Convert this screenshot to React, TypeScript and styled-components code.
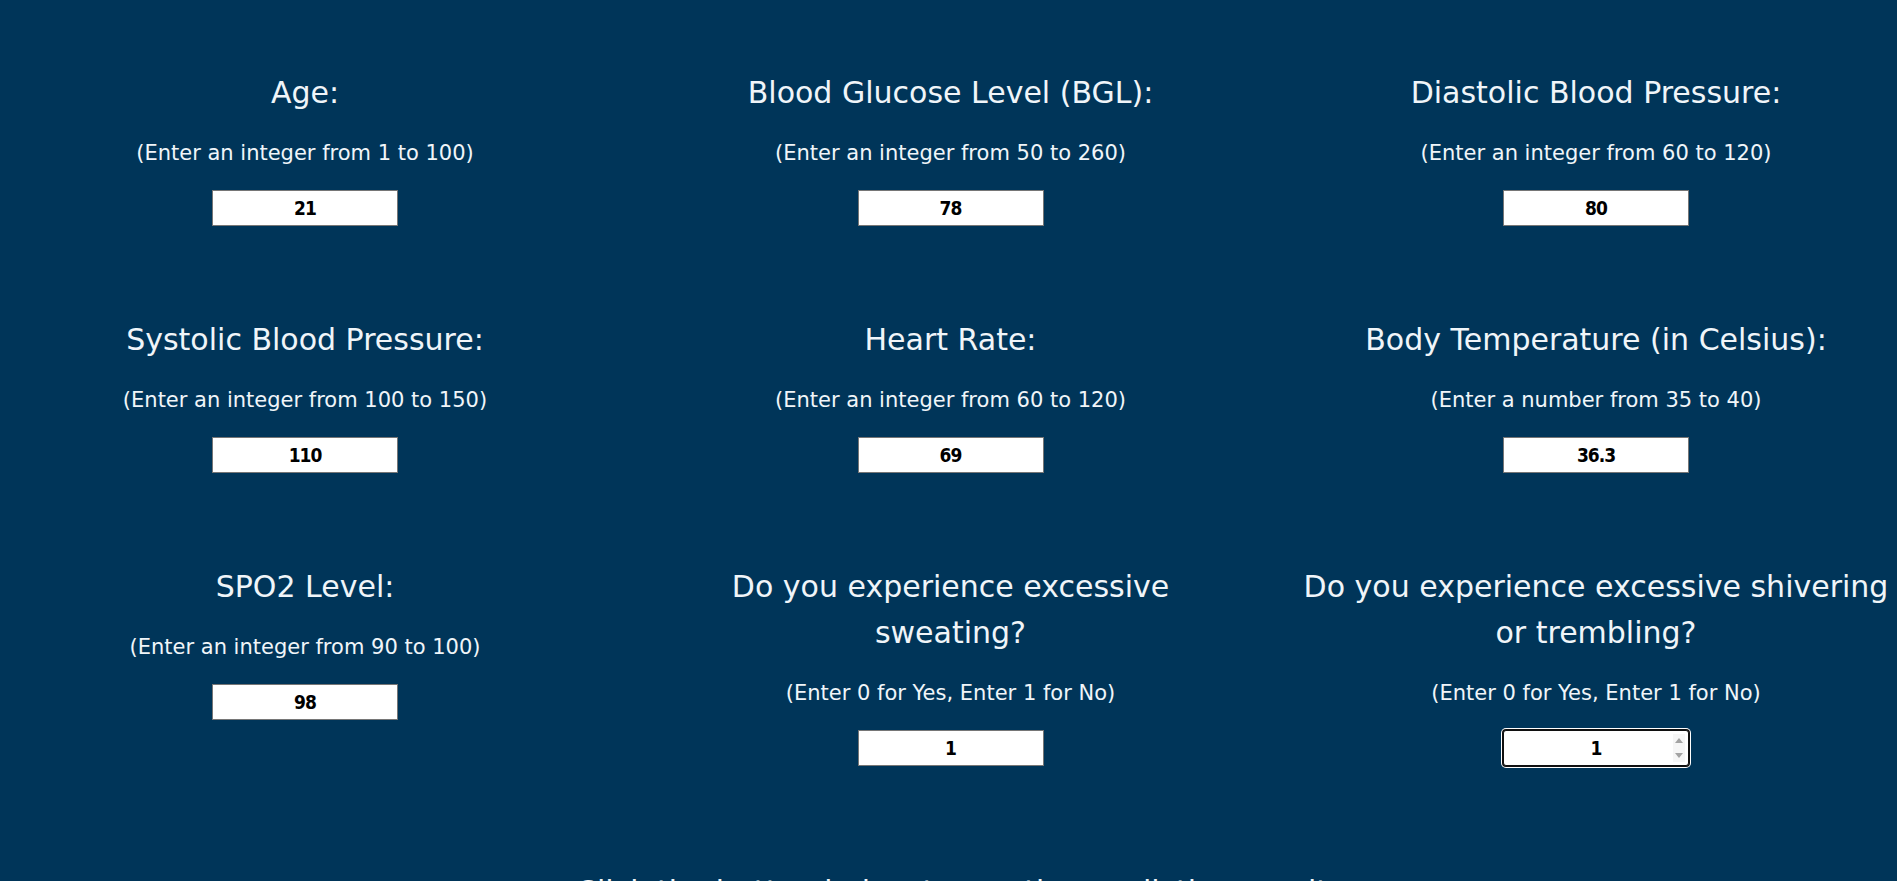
import React from "react";
import styled, { createGlobalStyle, css } from "styled-components";

const GlobalStyle = createGlobalStyle`
  html, body {
    margin: 0;
    padding: 0;
    background: #003559;
  }
  body {
    font-family: "DejaVu Sans", "Liberation Sans", sans-serif;
    color: #f0f5f9;
    overflow: hidden;
  }
  * { box-sizing: border-box; }
`;

const Page = styled.main`
  min-height: 100vh;
  padding: 70px 0 40px 7px;
  display: flex;
  flex-direction: column;
`;

const FieldGrid = styled.div`
  display: grid;
  grid-template-columns: repeat(3, 596px);
  column-gap: 49.5px;
  row-gap: 91px;
  align-items: start;
`;

const Field = styled.section`
  display: flex;
  flex-direction: column;
  align-items: center;
  text-align: center;
`;

const Label = styled.h2`
  margin: 0 0 21px;
  font-size: 30px;
  line-height: 46px;
  font-weight: 400;
  white-space: nowrap;
`;

const Hint = styled.p`
  margin: 0 0 21px;
  font-size: 21px;
  line-height: 32px;
  font-weight: 400;
`;

const InputWrap = styled.div`
  position: relative;
  width: 186px;
  height: 36px;
`;

const ValueInput = styled.input<{ $active?: boolean }>`
  width: 100%;
  height: 100%;
  margin: 0;
  padding: 0 4px;
  border: 1px solid #767676;
  background: #fff;
  color: #000;
  text-align: center;
  font-family: "DejaVu Sans Condensed", "DejaVu Sans", "Liberation Sans", sans-serif;
  font-stretch: condensed;
  font-weight: 700;
  font-size: 19px;
  letter-spacing: -1px;
  outline: none;
  -moz-appearance: textfield;
  &::-webkit-outer-spin-button,
  &::-webkit-inner-spin-button {
    -webkit-appearance: none;
    margin: 0;
  }
  ${(p) =>
    p.$active &&
    css`
      border: 1px solid #101010;
      border-radius: 3px;
      box-shadow: 0 0 0 1px #101010, 0 0 0 2px #ffffff;
    `}
`;

const Spinner = styled.span`
  position: absolute;
  right: 4px;
  top: 4px;
  bottom: 4px;
  width: 12px;
  display: flex;
  flex-direction: column;
  align-items: center;
  justify-content: space-between;
  padding: 4px 0;
  background: #f6f6f6;
`;

const Arrow = styled.span<{ $down?: boolean }>`
  width: 0;
  height: 0;
  border-left: 4px solid transparent;
  border-right: 4px solid transparent;
  ${(p) =>
    p.$down
      ? css`border-top: 5px solid #a3a3a3;`
      : css`border-bottom: 5px solid #a3a3a3;`}
`;

const Footer = styled.h2`
  margin: 103px 0 0;
  font-size: 30px;
  line-height: 46px;
  font-weight: 400;
  text-align: center;
  width: 1890px;
`;

type FieldData = {
  label: string[];
  hint: string;
  value: string;
  active?: boolean;
};

const fields: FieldData[] = [
  { label: ["Age:"], hint: "(Enter an integer from 1 to 100)", value: "21" },
  { label: ["Blood Glucose Level (BGL):"], hint: "(Enter an integer from 50 to 260)", value: "78" },
  { label: ["Diastolic Blood Pressure:"], hint: "(Enter an integer from 60 to 120)", value: "80" },
  { label: ["Systolic Blood Pressure:"], hint: "(Enter an integer from 100 to 150)", value: "110" },
  { label: ["Heart Rate:"], hint: "(Enter an integer from 60 to 120)", value: "69" },
  { label: ["Body Temperature (in Celsius):"], hint: "(Enter a number from 35 to 40)", value: "36.3" },
  { label: ["SPO2 Level:"], hint: "(Enter an integer from 90 to 100)", value: "98" },
  {
    label: ["Do you experience excessive", "sweating?"],
    hint: "(Enter 0 for Yes, Enter 1 for No)",
    value: "1",
  },
  {
    label: ["Do you experience excessive shivering", "or trembling?"],
    hint: "(Enter 0 for Yes, Enter 1 for No)",
    value: "1",
    active: true,
  },
];

export default function App() {
  return (
    <>
      <GlobalStyle />
      <Page>
        <FieldGrid>
          {fields.map((f, i) => (
            <Field key={i}>
              <Label>
                {f.label.map((line, j) => (
                  <React.Fragment key={j}>
                    {j > 0 && <br />}
                    {line}
                  </React.Fragment>
                ))}
              </Label>
              <Hint>{f.hint}</Hint>
              <InputWrap>
                <ValueInput
                  type="number"
                  defaultValue={f.value}
                  $active={f.active}
                  autoFocus={f.active}
                />
                {f.active && (
                  <Spinner>
                    <Arrow />
                    <Arrow $down />
                  </Spinner>
                )}
              </InputWrap>
            </Field>
          ))}
        </FieldGrid>
        <Footer>Click the button below to see the prediction result</Footer>
      </Page>
    </>
  );
}
